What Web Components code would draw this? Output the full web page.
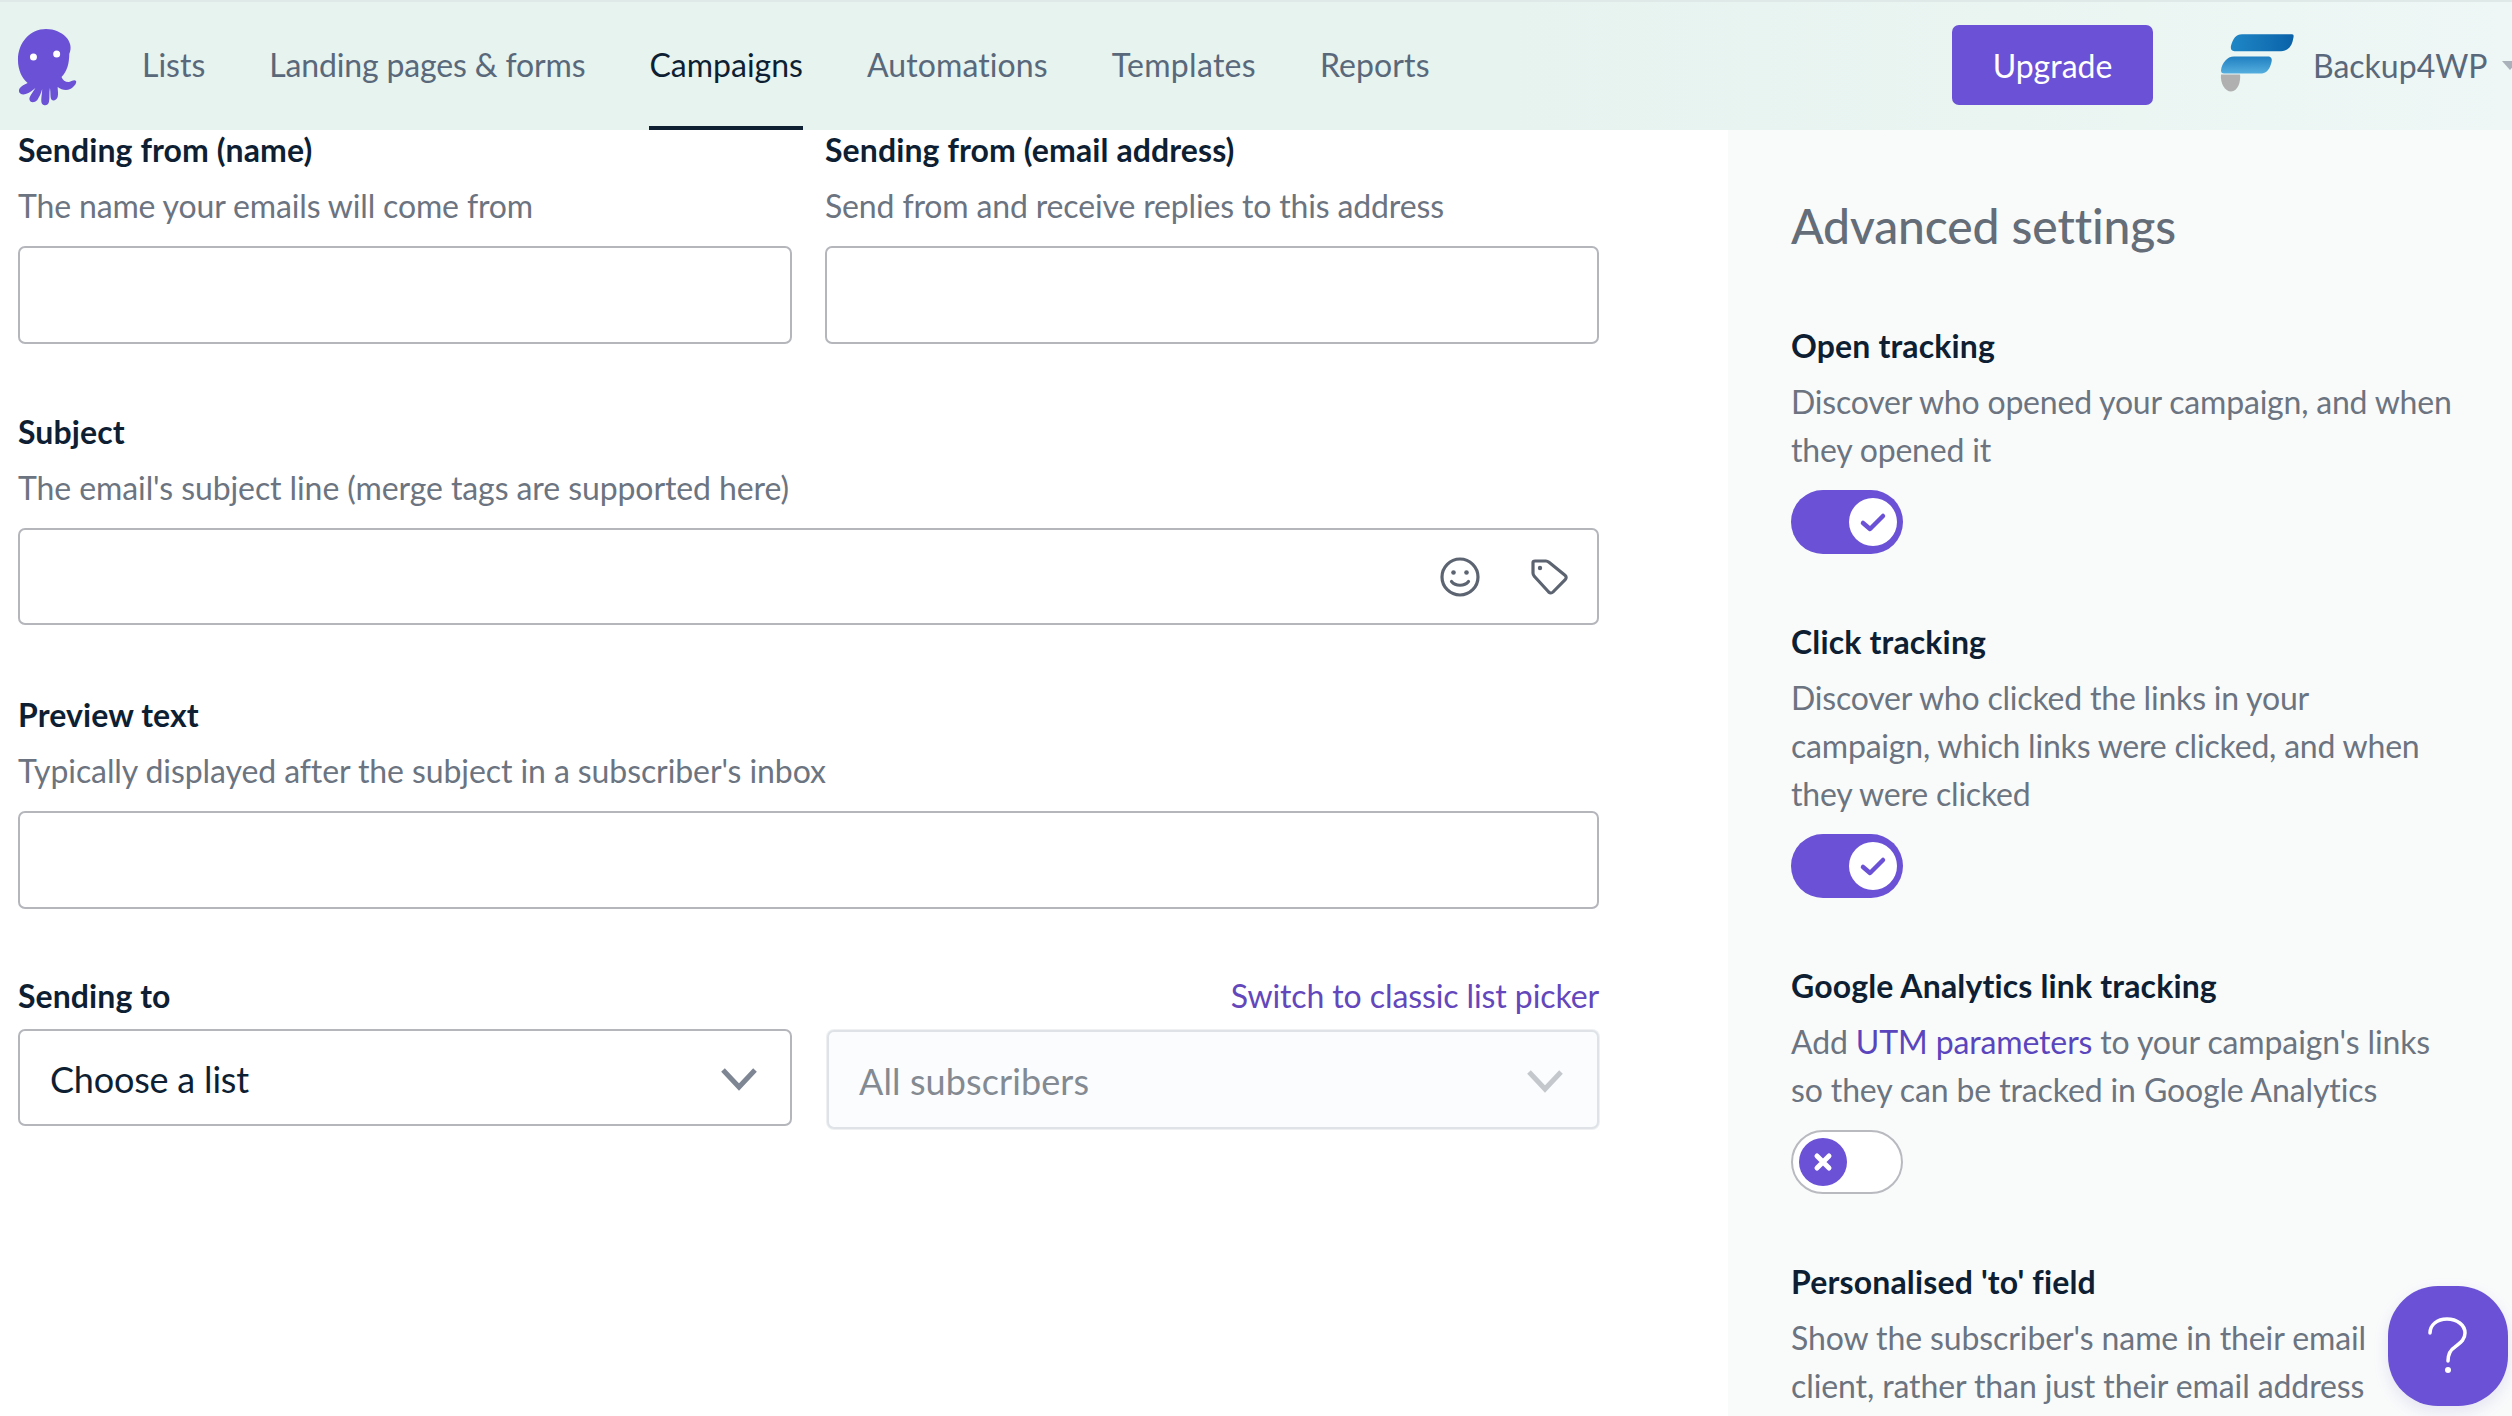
<!DOCTYPE html>
<html><head><meta charset="utf-8"><title>Campaign</title>
<style>
html,body{margin:0;padding:0;background:#fff}
body{width:2512px;height:1416px;overflow:hidden;font-family:Lato,"Liberation Sans",sans-serif;font-size:32px;color:#0f1f33}
</style></head><body>
<campaign-app></campaign-app>
<template id="nav-t"><style>
:host{display:flex;align-items:stretch;height:130px;background:linear-gradient(90deg,#e6f3ef 0,#e6f3ef 60%,#eef7f5 100%);box-shadow:inset 0 2px 0 #dfe9e7;font-size:32px;color:#59687a;padding-left:17px;overflow:hidden;position:relative;box-sizing:border-box}
.logo{width:60px;height:80px;align-self:center;margin-top:5px;margin-right:65px;flex:none}
.links{display:flex;gap:64px;flex:1}
.links a{display:flex;align-items:center;height:130px;box-sizing:border-box;border-bottom:4px solid transparent;padding-top:2px}
.links a.on{color:#0f1f33;border-bottom-color:#0f2033;}
.up{align-self:center;width:201px;height:80px;background:#6b51d5;color:#fff;border-radius:7px;display:flex;align-items:center;justify-content:center;margin-right:69px;flex:none}
.acct{display:flex;align-items:center;width:290px;flex:none;white-space:nowrap}
.acct svg{width:74px;height:66px;margin:0 19px 0 -2px;flex:none}
.car{width:0;height:0;border:8px solid transparent;border-top:9px solid #aab1ba;border-bottom:0;margin-left:14px;flex:none}
</style>
<svg class="logo" viewBox="0 0 62 80" preserveAspectRatio="none"><path fill="#6b51d5" d="M30 1C14 1 1 14 1 32c0 10 4 18 10 23-4 2-9 4-9 8 0 3 4 4 7 3 4-1 7-4 10-6-3 5-7 9-6 12 1 3 5 3 8 0 2-3 4-7 5-11 0 6-2 12 0 15 2 2 6 2 7-2 1-4 0-9 1-14 1 5 0 10 2 12 2 1 5 0 6-3 1-3 0-7 0-10 4 3 9 4 13 2 4-2 7-6 6-8-2-2-5 1-8 1-3 0-6-2-7-5 6-6 8-14 8-23C60 14 47 1 30 1z"/><circle cx="17" cy="29" r="3.6" fill="#fff"/><circle cx="41" cy="26" r="3.6" fill="#fff"/></svg>
<div class="links"><a>Lists</a><a style="letter-spacing:-.15px">Landing pages &amp; forms</a><a class="on">Campaigns</a><a style="letter-spacing:.1px">Automations</a><a style="letter-spacing:.3px">Templates</a><a style="letter-spacing:.1px">Reports</a></div>
<div class="up">Upgrade</div>
<div class="acct"><svg viewBox="0 0 74 62" preserveAspectRatio="none"><defs><linearGradient id="a" x1="0" x2="1"><stop offset="0" stop-color="#1f87c6"/><stop offset="1" stop-color="#0a62a8"/></linearGradient><linearGradient id="b" x1="0" x2="0" y1="0" y2="1"><stop offset="0" stop-color="#1f7fc0"/><stop offset="1" stop-color="#55aede"/></linearGradient></defs><path fill="url(#a)" d="M22 2h50c2 0 2 2 1 5-1 6-5 11-12 11H16c-2 0-6 0-5-5C13 6 16 2 22 2z"/><path fill="url(#b)" d="M14 23h34c3 0 5 2 3 7-2 6-5 9-11 9H4c-2 0-3-1-3-3 1-7 6-13 13-13z"/><path fill="#b0b0b1" d="M1 40h19c1 6-2 16-9 16C5 56 0 48 1 40z"/></svg>Backup4WP<i class="car"></i></div>
</template>
<template id="field-t"><style>
:host{display:block;min-width:0}
.l{font-weight:700;color:#0f1f33;line-height:40px;display:block;letter-spacing:.1px}
.h{color:#6b7480;line-height:40px;margin-top:16px;display:block;letter-spacing:-.15px}
.r{display:flex;justify-content:space-between}
.c{display:block;margin-top:var(--gap,20px)}
</style><div class="r"><span class="l"><slot name="label"></slot></span></div><span class="h" part="h"><slot name="hint"></slot></span><div class="c"><slot></slot></div></template>
<template id="input-t"><style>
:host{display:flex;align-items:center;justify-content:flex-end;box-sizing:border-box;height:var(--h,97px);background:#fff;border:2px solid #b4b6bc;border-radius:7px;gap:50px;padding-right:28px}
svg{display:block}
</style><slot></slot></template>
<template id="select-t"><style>
:host{display:flex;align-items:center;justify-content:space-between;box-sizing:border-box;height:97px;background:#fff;border:2px solid #b4b6bc;border-radius:7px;padding:2px 32px 0 30px;font-size:36px;letter-spacing:-.2px;color:#0f1f33}
:host([disabled]){height:99px;background:#fafcfd;border:2px solid #dfe3e7;box-shadow:0 0 0 1px #eef0f2;color:#848a92;margin:1px 0 0 2px;padding-left:30px;padding-right:33px;letter-spacing:.1px}
svg{width:38px;height:24px}
:host([disabled]) path{stroke:#c4c8cd}
</style><slot></slot><svg viewBox="0 0 38 24"><path d="M3 3l16 17L35 3" fill="none" stroke="#7e8694" stroke-width="5"/></svg></template>
<template id="toggle-t"><style>
:host{display:block;box-sizing:border-box;width:112px;height:64px;border-radius:32px;background:#6b51d5;position:relative}
:host([off]){background:#fff;border:2px solid #b8bac0}
.k{position:absolute;top:8px;left:58px;width:48px;height:48px;border-radius:50%;background:#fff;display:flex;align-items:center;justify-content:center}
:host([off]) .k{background:#6b51d5;left:6px;top:6px}
svg{width:28px;height:28px}
</style><span class="k"><svg viewBox="0 0 28 28"></svg></span></template>
<template id="setting-t"><style>
:host{display:block;margin-top:var(--mt,0)}
.t{font-weight:700;color:#0f1f33;line-height:40px;display:block;letter-spacing:.15px}
.d{color:#6b7480;line-height:48px;margin-top:12px;display:block;letter-spacing:-.2px}
.x{display:block;margin-top:16px}
</style><span class="t"><slot name="title"></slot></span><span class="d"><slot name="desc"></slot></span><span class="x"><slot></slot></span></template>
<template id="app-t"><style>
:host{display:block;position:relative;width:2512px;height:1416px;overflow:hidden}
.body{display:flex;height:1286px}
main{width:1728px;box-sizing:border-box;padding:0 129px 0 18px;flex:none;background:#fff}
.two{display:grid;grid-template-columns:1fr 1fr;gap:33px;--h:98px}
.mt{margin-top:69px;display:block}
.sel{display:grid;grid-template-columns:774px 774px;gap:33px;align-items:start}
aside{flex:1;background:#f9fbfb;box-sizing:border-box;padding:67px 0 0 63px;overflow:hidden}
h2{margin:0 0 71px;font-size:48px;font-weight:500;color:#646d78;line-height:58px;letter-spacing:-.1px}
.help{position:absolute;left:2388px;top:1286px;width:120px;height:120px;border-radius:50px;background:#6b51d5;box-shadow:0 6px 16px rgba(80,60,180,.12);display:flex;align-items:center;justify-content:center}
.setw{width:662px}
</style>
<app-nav></app-nav>
<div class="body"><main>
<div class="two" style="padding-top:0">
<form-field><span slot="label">Sending from (name)</span><span slot="hint">The name your emails will come from</span><text-input></text-input></form-field>
<form-field><span slot="label">Sending from (email address)</span><span slot="hint">Send from and receive replies to this address</span><text-input></text-input></form-field>
</div>
<form-field class="mt" style="margin-top:68px"><span slot="label">Subject</span><span slot="hint" style="letter-spacing:-.09px">The email's subject line (merge tags are supported here)</span><text-input>
<svg width="40" height="40" viewBox="0 0 40 40" fill="none" stroke="#5d6471" stroke-width="3.200"><circle cx="20" cy="20" r="18"/><circle cx="13.5" cy="15.5" r="2.300" fill="#5d6471" stroke="none"/><circle cx="26.5" cy="15.5" r="2.300" fill="#5d6471" stroke="none"/><path d="M11.5 24.5c4 5 13 5 17 0" stroke-linecap="round"/></svg>
<svg width="38" height="36" viewBox="0 0 38 36" fill="none" stroke="#5d6471" stroke-width="3.200" stroke-linejoin="round" style="margin-left:1px"><path d="M2 3.500C2 2.500 3 2 4 2h11c1 0 2 .5 3 1.300l16 13c1.500 1.200 1.500 3 .2 4.300L22 33c-1.300 1.300-3 1.300-4.300 0L3.500 17.500C2.500 16.500 2 15 2 14z"/><circle cx="9" cy="9" r="2.200" fill="#5d6471" stroke="none"/></svg>
</text-input></form-field>
<form-field class="mt" style="margin-top:70px;--h:98px"><span slot="label">Preview text</span><span slot="hint" style="letter-spacing:-.09px">Typically displayed after the subject in a subscriber's inbox</span><text-input></text-input></form-field>
<div class="sel" style="margin-top:67px">
<div style="grid-column:1/3;display:flex;justify-content:space-between;line-height:40px;font-weight:700;letter-spacing:.07px">Sending to<a style="color:#6347bb;font-weight:400;letter-spacing:-.1px">Switch to classic list picker</a></div>
</div>
<div class="sel" style="margin-top:13px"><select-box>Choose a list</select-box><select-box disabled>All subscribers</select-box></div>
</main>
<aside><h2>Advanced settings</h2><div class="setw">
<setting-item><span slot="title">Open tracking</span><span slot="desc">Discover who opened your campaign, and when they opened it</span><toggle-switch></toggle-switch></setting-item>
<setting-item style="--mt:68px"><span slot="title">Click tracking</span><span slot="desc">Discover who clicked the links in your campaign, which links were clicked, and when they were clicked</span><toggle-switch></toggle-switch></setting-item>
<setting-item style="--mt:68px"><span slot="title">Google Analytics link tracking</span><span slot="desc" style="letter-spacing:-.13px">Add <a style="color:#5a45bd">UTM parameters</a> to your campaign's links so they can be tracked in Google Analytics</span><toggle-switch off></toggle-switch></setting-item>
<setting-item style="--mt:68px"><span slot="title">Personalised 'to' field</span><span slot="desc" style="letter-spacing:-.1px">Show the subscriber's name in their email<br>client, rather than just their email address</span></setting-item>
</div></aside></div>
<div class="help"><svg width="44" height="58" viewBox="0 0 44 58" fill="none" stroke="#fff" stroke-width="3.500" stroke-linecap="round"><path d="M4 16C4 8 11 2 21 2c10 0 18 6 18 14 0 7-5 10-10 14-5 3-7 7-7 14"/><circle cx="22" cy="53" r="3" fill="#fff" stroke="none"/></svg></div>
</template>
<script>
function def(name,tid,after){customElements.define(name,class extends HTMLElement{constructor(){super();this.attachShadow({mode:'open'}).appendChild(document.getElementById(tid).content.cloneNode(true));}connectedCallback(){after&&after(this)}})}
def('app-nav','nav-t');def('form-field','field-t');def('text-input','input-t');def('select-box','select-t');def('setting-item','setting-t');
def('toggle-switch','toggle-t',el=>{el.shadowRoot.querySelector('svg').innerHTML=el.hasAttribute('off')?'<path d="M8 8l12 12M20 8L8 20" stroke="#fff" stroke-width="5" stroke-linecap="round"/>':'<path d="M4 15l7 6L24 8" fill="none" stroke="#6b51d5" stroke-width="4.500" stroke-linecap="round" stroke-linejoin="round"/>';});
def('campaign-app','app-t');
</script>
</body></html>
